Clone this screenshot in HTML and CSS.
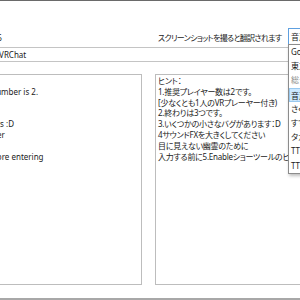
FILE: index.html
```html
<!DOCTYPE html>
<html lang="ja">
<head>
    <meta charset="UTF-8">
    <title>VRChat 翻訳</title>
    <link rel="stylesheet" href="styles.css">
</head>
<body>
<div class="main">
    <div class="top">
        <span class="ver">Ver 1.6</span>
        <span class="tip">スクリーンショットを撮ると翻訳されます</span>
    </div>
    <div class="input">Translator for VRChat</div>
    <div class="panes">
        <div class="box box1">
            <p>Hint:</p>
            <p>1.Recommended player number is 2.</p>
            <p>(At least 1 VR player)</p>
            <p>2.There are 3 endings.</p>
            <p>3.There are some little bugs :D</p>
            <p>4.Make the sound FX bigger</p>
            <p>for invisible ghosts</p>
            <p>5.Enable show tool tip before entering</p>
        </div>
        <div class="box box2">
            <p>ヒント：</p>
            <p>1.推奨プレイヤー数は2です。</p>
            <p>[少なくとも1人のVRプレーヤー付き)</p>
            <p>2.終わりは3つです。</p>
            <p>3.いくつかの小さなバグがあります：D</p>
            <p>4サウンドFXを大きくしてください</p>
            <p>目に見えない幽霊のために</p>
            <p>入力する前に5.Enableショーツールのヒント</p>
        </div>
    </div>
    <div class="bottom"></div>
</div>

<!-- 翻訳エンジンの選択 (開いた状態) -->
<div class="combo">音声</div>
<ul class="list">
    <li>Google</li>
    <li>東方</li>
    <li class="dim">総合</li>
    <li class="on">音声</li>
    <li>さくら</li>
    <li>すずき</li>
    <li>タカ</li>
    <li>TTS</li>
    <li>TTS2</li>
</ul>
</body>
</html>
```

FILE: styles.css
```css
html, body{
    margin: 0;
    height: 300px;
    overflow: hidden;
    background: #fff;
}
body{
    font-family: "Noto Sans", "Noto Sans CJK JP", sans-serif;
    font-size: 8px;
    font-feature-settings: "palt";
    color: #1b1b1b;
    border-top: 1px solid #6a6a6a;
    position: relative;
}
.main{
    margin-left: -208px;
    width: 700px;
}
.top{
    display: grid;
    grid-template-columns: 350px 1fr;
    column-gap: 13px;
    height: 46px;
    align-items: end;
}
.top span{
    line-height: 11px;
    padding-bottom: 4px;
    white-space: nowrap;
}
.ver{
    padding-left: 184px;
}
.tip{
    padding-left: 3px;
    letter-spacing: -0.7px;
}
.input{
    width: 494px;
    height: 13px;
    line-height: 13px;
    border: 1px solid #c4c4c4;
    padding-left: 153px;
    box-sizing: content-box;
}
.panes{
    display: grid;
    grid-template-columns: 350px 330px;
    column-gap: 13px;
    margin-top: 12px;
}
.box{
    border: 1px solid #bdbdbd;
    height: 207px;
    padding: 1px 2px;
}
.box p{
    margin: 0;
    line-height: 10.8px;
    white-space: nowrap;
}
.box1{
    padding-left: 107px;
}
.box2{
    letter-spacing: -0.25px;
}
.bottom{
    margin-top: 13px;
    border-top: 2px solid #a8a8a8;
}
.combo{
    position: absolute;
    left: 288px;
    top: 27px;
    width: 40px;
    height: 15px;
    line-height: 15px;
    border: 1px solid #5ea0e0;
    background: #fff;
    padding-left: 2px;
}
.list{
    position: absolute;
    left: 288px;
    top: 43px;
    width: 40px;
    margin: 0;
    padding: 0;
    list-style: none;
    background: #fff;
    border: 1px solid #8c8c8c;
    box-shadow: 1px 2px 3px rgba(0,0,0,.25);
}
.list li{
    height: 14.2px;
    line-height: 14.2px;
    padding-left: 2px;
    box-sizing: border-box;
}
.list .dim{
    color: #8a8a8a;
}
.list .on{
    background: #cce8ff;
    border: 1px solid #99c9ef;
    padding-left: 1px;
}
```
